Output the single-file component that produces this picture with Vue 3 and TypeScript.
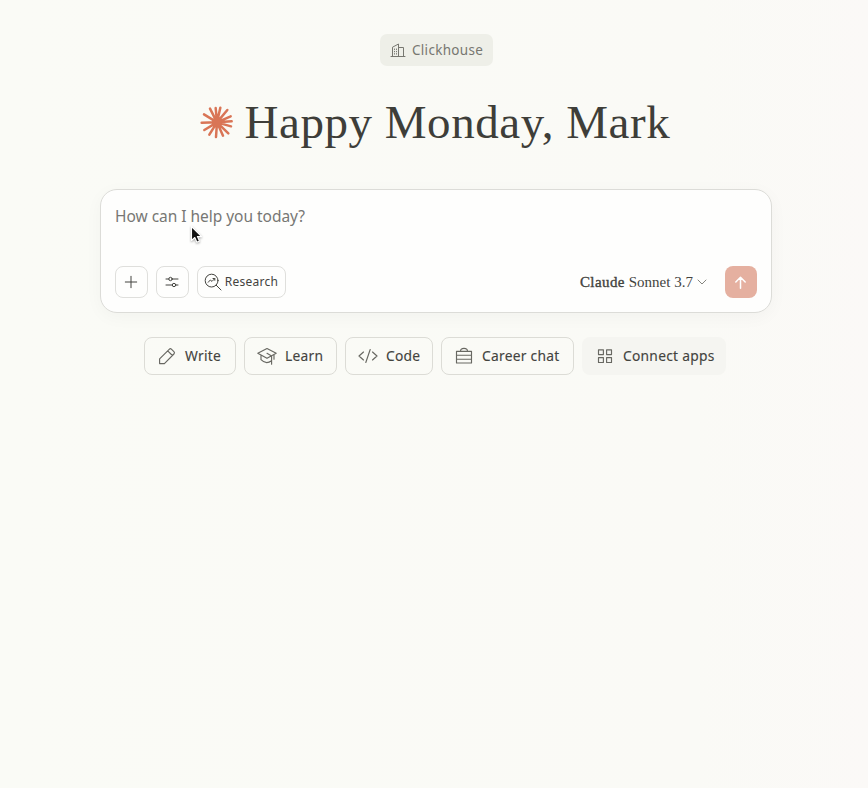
<script setup lang="ts">
interface Chip {
  id: string
  label: string
  active?: boolean
}

const chips: Chip[] = [
  { id: 'write', label: 'Write' },
  { id: 'learn', label: 'Learn' },
  { id: 'code', label: 'Code' },
  { id: 'career', label: 'Career chat' },
  { id: 'connect', label: 'Connect apps', active: true },
]
</script>

<template>
  <main class="page">
    <div class="org">
      <svg class="org-icon" viewBox="0 0 16 16">
        <path d="M1 14.5h14M2.5 14.5V5.2L8.5 2v12.5M8.5 5.5h5v9M4.5 7v.5M6.5 7v.5M4.5 9.3v.5M6.5 9.3v.5M4.5 11.6v.5M6.5 11.6v.5" />
      </svg>
      <span>Clickhouse</span>
    </div>

    <h1 class="greeting">
      <svg class="burst" viewBox="27 45 102 102">
        <path d="M81 97 60 56M81 97 77 54M81 97 91 53M81 97 112 60M81 97 122 79M81 97 125 94M81 97 123 109M81 97 115 130M81 97 99 137M81 97 78 141M81 97 58 134M81 97 43 120M81 97 35 98M81 97 42 73" />
        <circle cx="81" cy="97" r="15" />
      </svg>
      <span>Happy Monday, Mark</span>
    </h1>

    <section class="composer">
      <div class="prompt">How can I help you today?</div>
      <div class="toolbar">
        <button class="tool square">
          <svg viewBox="0 0 16 16"><path d="M8 2.3v11.4M2.3 8h11.4" /></svg>
        </button>
        <button class="tool square">
          <svg viewBox="0 0 16 16">
            <path d="M2 5h2.8M8.2 5H14M2 11h6.3M11.7 11H14" />
            <circle cx="6.5" cy="5" r="1.7" /><circle cx="10" cy="11" r="1.7" />
          </svg>
        </button>
        <button class="tool research">
          <svg viewBox="0 0 18 18">
            <circle cx="7.6" cy="7.6" r="6.4" />
            <path d="m12.2 12.2 4.8 4.8M4.2 9.3l2.1-2.3 1.7 1.4 2.6-2.6M9 5.5h1.8v1.8" />
          </svg>
          <span>Research</span>
        </button>
        <button class="model">
          <span><b>Claude</b> Sonnet 3.7</span>
          <svg viewBox="0 0 10 10"><path d="m1 3 4 4 4-4" /></svg>
        </button>
        <button class="send">
          <svg viewBox="0 0 16 16"><path d="M8 14V2.5M3 7.5l5-5 5 5" /></svg>
        </button>
      </div>
    </section>

    <nav class="chips">
      <button v-for="chip in chips" :key="chip.id" class="chip" :class="[chip.id, { active: chip.active }]">
        <svg v-if="chip.id === 'write'" viewBox="0 0 20 20">
          <path d="M2.6 17.6V12.8L12.2 3.3c.8-.8 1.6-.8 2.4 0l2.3 2.3c.8.8.8 1.6 0 2.4L7.4 17.6ZM10.7 4.8l4.7 4.7" />
        </svg>
        <svg v-else-if="chip.id === 'learn'" viewBox="0 0 20 20">
          <path d="m.8 7.3 9.2-4.7 9.2 4.7-9.2 5ZM4 9.2v4.5c3.2 3.3 7.3 3.5 10.5 1M10 7.3l4.6 2.6v8.3M17 8.6v4.6" />
        </svg>
        <svg v-else-if="chip.id === 'code'" viewBox="0 0 20 20">
          <path d="M5.5 6 1 10l4.5 4M14.5 6l4.5 4-4.5 4M12.2 3.5 7.8 16.5" />
        </svg>
        <svg v-else-if="chip.id === 'career'" viewBox="0 0 20 20">
          <path d="M2.5 5.3h15v11.7h-15ZM2.5 9.2h15M2.5 13.2h15M6.5 5.3c0-2.5.9-3 3.5-3s3.5.5 3.5 3" />
        </svg>
        <svg v-else viewBox="0 0 20 20">
          <path d="M3.5 3.8h4.9v4.8H3.5ZM11.6 3.8h4.9v4.8h-4.9ZM3.5 11.6h4.9v4.9H3.5ZM11.6 11.6h4.9v4.9h-4.9Z" />
        </svg>
        <span>{{ chip.label }}</span>
      </button>
    </nav>

    <svg class="pointer" viewBox="0 0 14 20">
      <path d="M1.5 1.5v14l3.3-3 2.1 4.8 2.6-1.2-2.1-4.5h4.2Z" />
    </svg>
  </main>
</template>

<style>
body {
  background: #fafaf6;
}
</style>

<style scoped>
.page {
  position: relative;
  box-sizing: border-box;
  width: 868px;
  height: 788px;
  padding-top: 34px;
  overflow: hidden;
  display: flex;
  flex-direction: column;
  align-items: center;
  background: linear-gradient(90deg, #fafbf6 0%, #fafaf6 80%, #fbf9f7 100%);
  font-family: 'Noto Sans', sans-serif;
  color: #43433e;
}
svg {
  flex: none;
  fill: none;
  stroke: currentColor;
  stroke-linecap: round;
  stroke-linejoin: round;
}
button {
  box-sizing: border-box;
  padding: 0;
  border: 0;
  background: none;
  color: inherit;
  font: inherit;
}
span,
.prompt {
  white-space: nowrap;
}
.org {
  box-sizing: border-box;
  width: 113px;
  height: 32px;
  margin-left: 5px;
  padding-left: 10px;
  display: flex;
  align-items: center;
  gap: 6px;
  border-radius: 7px;
  background: #eeefe8;
  color: #777770;
  font-size: 13.5px;
  letter-spacing: 0.3px;
}
.org span {
  padding-bottom: 1px;
}
.org-icon {
  width: 16px;
  height: 16px;
}
.greeting {
  box-sizing: border-box;
  width: 472px;
  height: 60px;
  margin: 26px 0 0 1px;
  display: flex;
  align-items: center;
  gap: 12px;
  font: 400 47px/60px 'Liberation Serif', serif;
  letter-spacing: 0.54px;
  color: #3e3e39;
}
.burst {
  width: 34px;
  height: 34px;
  stroke: #d97556;
  stroke-width: 7.5;
}
.burst circle {
  fill: #d97556;
  stroke: none;
}
.composer {
  box-sizing: border-box;
  width: 672px;
  height: 124px;
  margin: 37px 0 0 4px;
  padding: 13px 14px 14px;
  display: flex;
  flex-direction: column;
  justify-content: space-between;
  border: 1px solid #dcdcd8;
  border-radius: 17px;
  background: #fefefd;
  box-shadow: 0 4px 18px rgba(0, 0, 0, 0.035);
}
.prompt {
  height: 26px;
  line-height: 26px;
  font-size: 15.5px;
  letter-spacing: -0.03px;
  color: #777774;
}
.toolbar {
  display: flex;
  align-items: center;
}
.tool {
  height: 32px;
  margin-right: 8px;
  display: flex;
  align-items: center;
  justify-content: center;
  border: 1px solid #dfdfdc;
  border-radius: 8px;
}
.square {
  width: 33px;
  padding-right: 1px;
}
.square svg {
  width: 16px;
  height: 16px;
}
.research {
  width: 89px;
  padding-right: 1px;
  gap: 3px;
  font-size: 12px;
  letter-spacing: 0.25px;
}
.research span {
  padding-bottom: 1px;
}
.research svg {
  width: 18px;
  height: 18px;
}
.model {
  margin-left: auto;
  margin-right: 18px;
  display: flex;
  align-items: center;
  gap: 4px;
  font: 15px/20px 'Liberation Serif', serif;
  letter-spacing: 0.16px;
}
.model b {
  font-weight: 400;
  letter-spacing: 0.4px;
  -webkit-text-stroke: 0.35px currentColor;
}
.model span {
  letter-spacing: 0.02px;
}
.model svg {
  width: 10px;
  height: 10px;
  color: #85857f;
}
.send {
  width: 32px;
  height: 32px;
  padding-right: 1px;
  display: flex;
  align-items: center;
  justify-content: center;
  border-radius: 8px;
  background: #e5b0a0;
  color: #fff;
}
.send svg {
  width: 15px;
  height: 15px;
  stroke-width: 1.6;
}
.chips {
  margin: 24px 0 0 2px;
  display: flex;
  gap: 8px;
}
.chip {
  height: 38px;
  padding-left: 12px;
  display: flex;
  align-items: center;
  gap: 8px;
  border: 1px solid #dcdcd6;
  border-radius: 8px;
  font-size: 13.8px;
  letter-spacing: 0.26px;
}
.chip span {
  padding-bottom: 2px;
  -webkit-text-stroke: 0.12px currentColor;
}
.chip svg {
  width: 20px;
  height: 20px;
  color: #686862;
  stroke-width: 1.15;
}
.write {
  width: 92px;
}
.learn {
  width: 93px;
}
.code {
  width: 88px;
}
.career {
  width: 133px;
}
.connect {
  width: 144px;
}
.chip.active {
  border-color: transparent;
  background: #f5f5f1;
}
.pointer {
  position: absolute;
  left: 190px;
  top: 225px;
  width: 14px;
  height: 20px;
  fill: #111;
  stroke: #fff;
  stroke-width: 1.1;
  filter: drop-shadow(0 1px 1px rgba(0, 0, 0, 0.35));
}
</style>
